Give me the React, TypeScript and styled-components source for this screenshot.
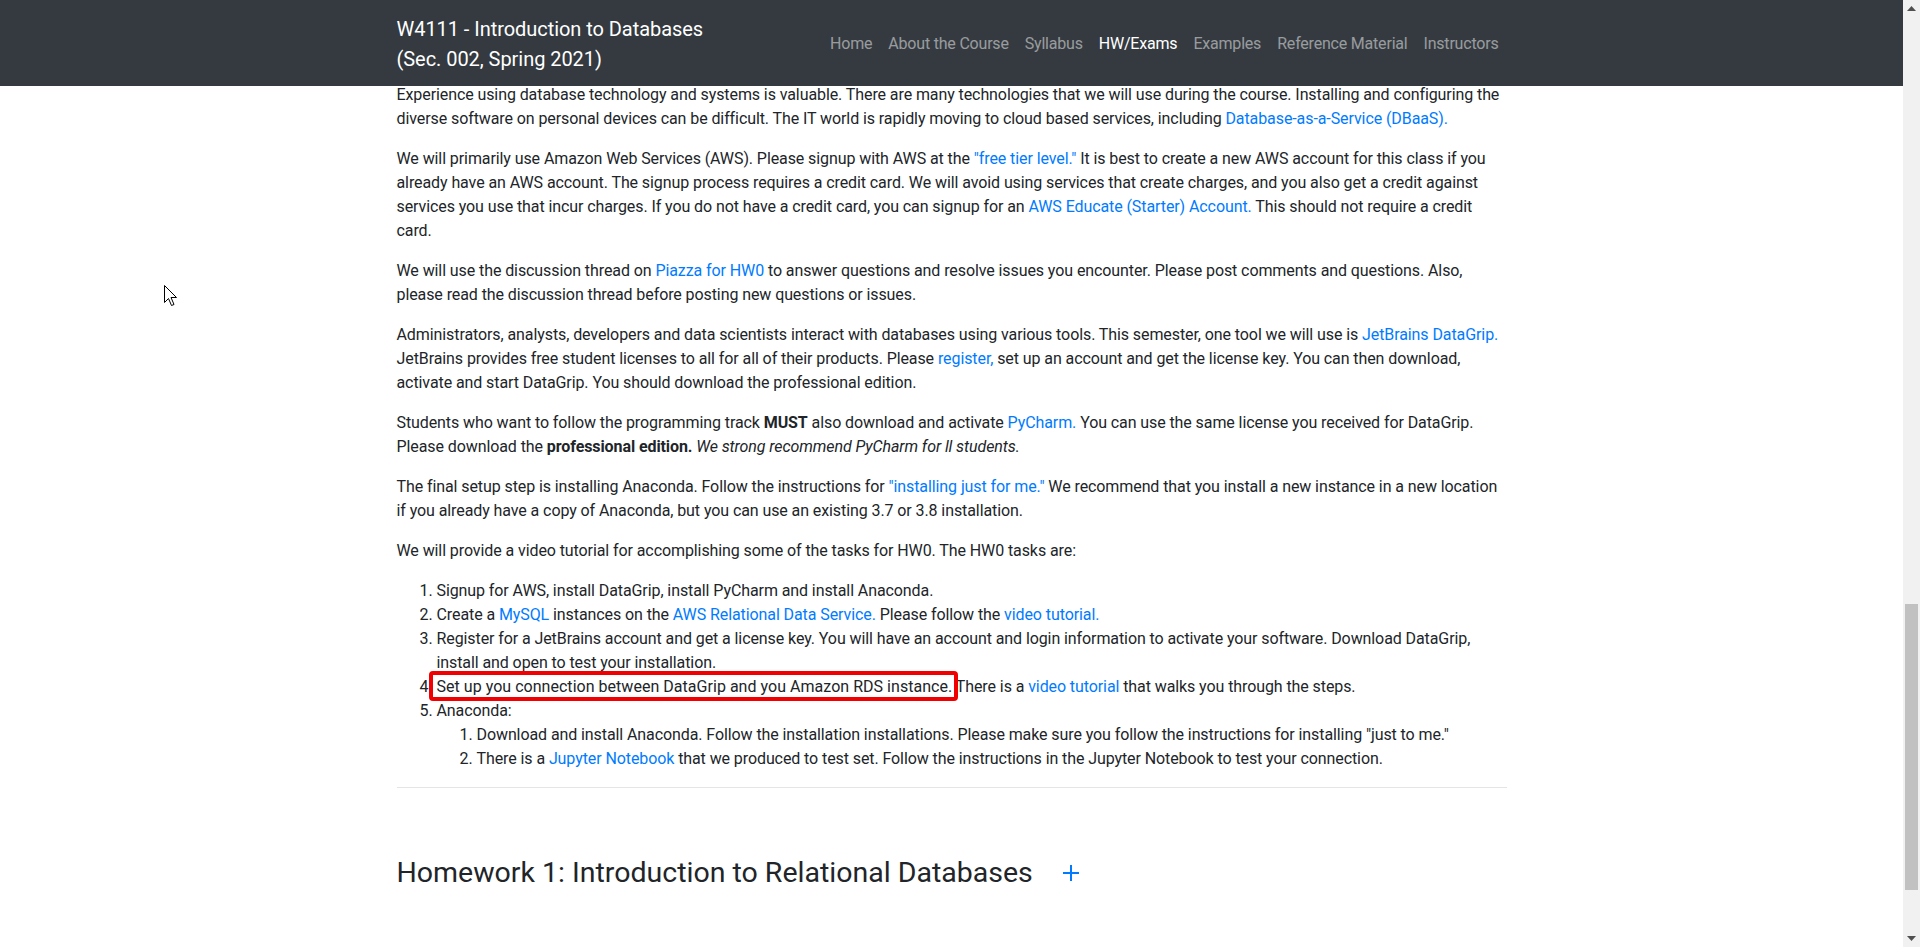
import React from "react";
import styled, { createGlobalStyle } from "styled-components";

const GlobalStyle = createGlobalStyle`
  html, body { margin: 0; padding: 0; height: 100%; overflow: hidden; }
  body {
    font-family: Roboto, "Noto Sans", "Liberation Sans", sans-serif;
    font-size: 16px;
    line-height: 1.5;
    letter-spacing: -0.09px;
    color: #212529;
    background: #fff;
  }
  #root { height: 100%; }
`;

const Viewport = styled.div`
  display: flex;
  height: 947px;
  width: 1920px;
  overflow: hidden;
`;

const Page = styled.div`
  flex: 1;
  display: flex;
  flex-direction: column;
  overflow: hidden;
`;

const Navbar = styled.nav`
  flex-shrink: 0;
  height: 86px;
  background: #343a40;
  position: relative;
  z-index: 2;
`;

const Container = styled.div`
  width: 1140px;
  box-sizing: border-box;
  padding: 0 15px;
  margin: 0 auto;
`;

const NavInner = styled(Container)`
  height: 100%;
  padding-top: 2px;
  display: flex;
  align-items: center;
  justify-content: space-between;
`;

const Brand = styled.a`
  color: #fff;
  font-size: 20px;
  line-height: 30px;
  letter-spacing: -0.05px;
  text-decoration: none;
`;

const NavList = styled.ul`
  display: flex;
  list-style: none;
  margin: 0;
  padding: 0;
`;

const NavLink = styled.a<{ $active?: boolean }>`
  display: block;
  padding: 8px 8px;
  color: ${(p) => (p.$active ? "#fff" : "rgba(255,255,255,.5)")};
  text-decoration: none;
  font-size: 16px;
  letter-spacing: -0.2px;
`;

const Content = styled(Container)`
  margin-top: -3px;
`;

const P = styled.p`
  margin: 0 0 16px;
`;

const A = styled.a`
  color: #007bff;
  text-decoration: none;
`;

const Ol = styled.ol<{ $nested?: boolean }>`
  margin: 0 0 ${(p) => (p.$nested ? "0" : "16px")};
  padding-left: 40px;
`;

const Highlight = styled.span`
  position: relative;
  display: inline-block;
  letter-spacing: 0.03px;
  &::after {
    content: "";
    position: absolute;
    left: -8px;
    right: -6px;
    top: -4px;
    bottom: -2px;
    border: 4px solid #f00000;
    border-radius: 4px;
    pointer-events: none;
  }
`;

const Hr = styled.hr`
  margin: 0;
  border: 0;
  border-top: 1px solid rgba(0, 0, 0, 0.1);
`;

const SectionHeading = styled.h2`
  display: flex;
  align-items: center;
  gap: 30px;
  margin: 68px 0 0;
  font-size: 28.5px;
  font-weight: 400;
  letter-spacing: 0;
  line-height: 1.2;
  color: #212529;
`;

const PlusButton = styled.span`
  display: inline-flex;
  color: #007bff;
`;

const Scrollbar = styled.div`
  width: 17px;
  flex-shrink: 0;
  background: #f1f1f1;
  display: flex;
  flex-direction: column;
  align-items: center;
`;

const ScrollArrow = styled.div`
  height: 17px;
  width: 17px;
  display: flex;
  align-items: center;
  justify-content: center;
`;

const ScrollTrack = styled.div`
  flex: 1;
  width: 100%;
  display: flex;
  flex-direction: column;
  align-items: center;
`;

const Thumb = styled.div`
  width: 13px;
  height: 286px;
  margin-top: 587px;
  background: #c1c1c1;
`;

const Cursor = styled.svg`
  position: fixed;
  left: 164px;
  top: 285px;
  z-index: 5;
`;

const navItems = [
  "Home",
  "About the Course",
  "Syllabus",
  "HW/Exams",
  "Examples",
  "Reference Material",
  "Instructors",
];

export default function App() {
  return (
    <>
      <GlobalStyle />
      <Viewport>
        <Page>
          <Navbar>
            <NavInner>
              <Brand href="#">
                W4111 - Introduction to Databases
                <br />
                (Sec. 002, Spring 2021)
              </Brand>
              <NavList>
                {navItems.map((n) => (
                  <li key={n}>
                    <NavLink href="#" $active={n === "HW/Exams"}>
                      {n}
                    </NavLink>
                  </li>
                ))}
              </NavList>
            </NavInner>
          </Navbar>
          <Content>
            <P>
              Experience using database technology and systems is valuable. There are many
              technologies that we will use during the course. Installing and configuring the
              diverse software on personal devices can be difficult. The IT world is rapidly
              moving to cloud based services, including{" "}
              <A href="#">Database-as-a-Service (DBaaS).</A>
            </P>
            <P>
              We will primarily use Amazon Web Services (AWS). Please signup with AWS at the{" "}
              <A href="#">"free tier level."</A> It is best to create a new AWS account for this
              class if you already have an AWS account. The signup process requires a credit card.
              We will avoid using services that create charges, and you also get a credit against
              services you use that incur charges. If you do not have a credit card, you can signup
              for an <A href="#">AWS Educate (Starter) Account.</A> This should not require a
              credit card.
            </P>
            <P>
              We will use the discussion thread on <A href="#">Piazza for HW0</A> to answer
              questions and resolve issues you encounter. Please post comments and questions.
              Also, please read the discussion thread before posting new questions or issues.
            </P>
            <P>
              Administrators, analysts, developers and data scientists interact with databases
              using various tools. This semester, one tool we will use is{" "}
              <A href="#">JetBrains DataGrip.</A> JetBrains provides free student licenses to all
              for all of their products. Please <A href="#">register,</A> set up an account and get
              the license key. You can then download, activate and start DataGrip. You should
              download the professional edition.
            </P>
            <P>
              Students who want to follow the programming track <b>MUST</b> also download and
              activate <A href="#">PyCharm.</A> You can use the same license you received for
              DataGrip. Please download the <b>professional edition.</b>{" "}
              <i>We strong recommend PyCharm for ll students.</i>
            </P>
            <P>
              The final setup step is installing Anaconda. Follow the instructions for{" "}
              <A href="#">"installing just for me."</A> We recommend that you install a new
              instance in a new location if you already have a copy of Anaconda, but you can use
              an existing 3.7 or 3.8 installation.
            </P>
            <P>
              We will provide a video tutorial for accomplishing some of the tasks for HW0. The
              HW0 tasks are:
            </P>
            <Ol>
              <li>Signup for AWS, install DataGrip, install PyCharm and install Anaconda.</li>
              <li>
                Create a <A href="#">MySQL</A> instances on the{" "}
                <A href="#">AWS Relational Data Service.</A> Please follow the{" "}
                <A href="#">video tutorial.</A>
              </li>
              <li>
                Register for a JetBrains account and get a license key. You will have an account
                and login information to activate your software. Download DataGrip, install and
                open to test your installation.
              </li>
              <li>
                <Highlight>
                  Set up you connection between DataGrip and you Amazon RDS instance.
                </Highlight>{" "}
                There is a <A href="#">video tutorial</A> that walks you through the steps.
              </li>
              <li>
                Anaconda:
                <Ol $nested>
                  <li>
                    Download and install Anaconda. Follow the installation installations. Please
                    make sure you follow the instructions for installing "just to me."
                  </li>
                  <li>
                    There is a <A href="#">Jupyter Notebook</A> that we produced to test set.
                    Follow the instructions in the Jupyter Notebook to test your connection.
                  </li>
                </Ol>
              </li>
            </Ol>
            <Hr />
            <SectionHeading>
              Homework 1: Introduction to Relational Databases
              <PlusButton>
                <svg width="16" height="16" viewBox="0 0 16 16">
                  <path d="M8 0v16M0 8h16" stroke="currentColor" strokeWidth="2" />
                </svg>
              </PlusButton>
            </SectionHeading>
          </Content>
        </Page>
        <Scrollbar>
          <ScrollArrow>
            <svg width="9" height="5" viewBox="0 0 9 5">
              <path d="M0 5L4.5 0L9 5Z" fill="#505050" />
            </svg>
          </ScrollArrow>
          <ScrollTrack>
            <Thumb />
          </ScrollTrack>
          <ScrollArrow>
            <svg width="9" height="5" viewBox="0 0 9 5">
              <path d="M0 0L4.5 5L9 0Z" fill="#505050" />
            </svg>
          </ScrollArrow>
        </Scrollbar>
      </Viewport>
      <Cursor width="13" height="21" viewBox="0 0 13 21">
        <path
          d="M0.5 0.5V17.5L4.5 13.5L7.5 20.5L10 19.5L7 12.5H12.5Z"
          fill="#fff"
          stroke="#000"
          strokeWidth="1"
          strokeLinejoin="miter"
        />
      </Cursor>
    </>
  );
}
